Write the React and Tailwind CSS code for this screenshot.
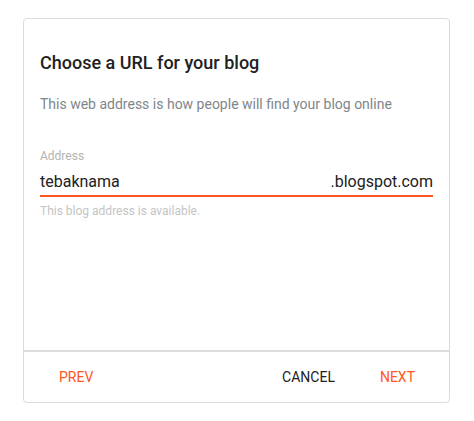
import React from 'react';

const App = () => {
  return (
    <div className="w-[474px] h-[421px] bg-white pt-[18px] pl-[23px]" style={{ fontFamily: 'Roboto, "Liberation Sans", sans-serif' }}>
      <div className="w-[427px] h-[385px] border border-[#d5dde3] rounded-[4px] flex flex-col">
        <div className="flex-1 px-4 pt-8">
          <h1 className="text-[18px] leading-6 font-medium text-[#212121]">Choose a URL for your blog</h1>
          <p className="mt-[19px] text-[14px] leading-5 text-[#80868b]">
            This web address is how people will find your blog online
          </p>

          <div className="mt-[34px]">
            <label className="block text-[12px] leading-4 text-[#b4b4b4]">Address</label>
            <div className="mt-[6px] flex items-center justify-between border-b-2 border-[#ff5722] pb-[1px]">
              <span className="text-[16px] leading-6 text-[#212121]">tebaknama</span>
              <span className="text-[16px] leading-6 text-[#212121]">.blogspot.com</span>
            </div>
            <p className="mt-[6px] text-[12px] leading-4 text-[#c4c4c4]">This blog address is available.</p>
          </div>
        </div>

        <div className="h-[52px] border-t-2 border-[#dcdcdc] flex items-center pl-[19px] pr-[18px]">
          <button className="px-4 text-[14px] leading-5 text-[#ff5722]">PREV</button>
          <div className="flex-1" />
          <button className="px-4 text-[14px] leading-5 text-[#212121]">CANCEL</button>
          <button className="ml-[13px] px-4 text-[14px] leading-5 text-[#ff5722]">NEXT</button>
        </div>
      </div>
    </div>
  );
};

export default App;
